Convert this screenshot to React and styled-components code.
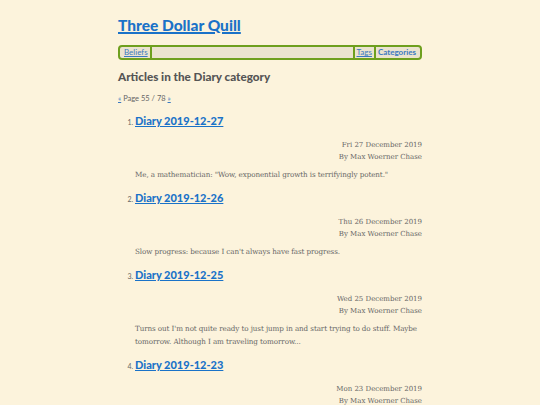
import React from 'react';
import styled, { createGlobalStyle } from 'styled-components';

const GlobalStyle = createGlobalStyle`
    html, body {
        margin: 0;
        padding: 0;
        background: #fcf3dc;
    }
`;

const articles = [
    {
        title: 'Diary 2019-12-27',
        date: 'Fri 27 December 2019',
        summary: 'Me, a mathematician: "Wow, exponential growth is terrifyingly potent."',
    },
    {
        title: 'Diary 2019-12-26',
        date: 'Thu 26 December 2019',
        summary: "Slow progress: because I can't always have fast progress.",
    },
    {
        title: 'Diary 2019-12-25',
        date: 'Wed 25 December 2019',
        summary: "Turns out I'm not quite ready to just jump in and start trying to do stuff. Maybe tomorrow. Although I am traveling tomorrow...",
    },
    {
        title: 'Diary 2019-12-23',
        date: 'Mon 23 December 2019',
        summary: '',
    },
];

function App() {
    return (
        <Page>
            <GlobalStyle />
            <Title href="#">Three Dollar Quill</Title>
            <Nav>
                <NavLink href="#">Beliefs</NavLink>
                <Spacer />
                <NavLink href="#">Tags</NavLink>
                <NavLink href="#" $current>Categories</NavLink>
            </Nav>
            <Heading>Articles in the Diary category</Heading>
            <Pager>
                <a href="#">«</a> Page 55 / 78 <a href="#">»</a>
            </Pager>
            <List>
                {articles.map((a) => (
                    <Item key={a.title}>
                        <ItemTitle href="#">{a.title}</ItemTitle>
                        <Meta>
                            <div>{a.date}</div>
                            <div>By Max Woerner Chase</div>
                        </Meta>
                        {a.summary && <Summary>{a.summary}</Summary>}
                    </Item>
                ))}
            </List>
        </Page>
    );
}

const Page = styled.div`
    width: 304px;
    margin: 0 auto;
    padding-top: 14px;
    font-family: 'DejaVu Serif', serif;
    color: #555;
`;

const Title = styled.a`
    display: block;
    font-family: 'Lato', 'Open Sans', sans-serif;
    font-weight: 900;
    font-size: 15.5px;
    line-height: 22px;
    color: #1a72c8;
    text-decoration: underline;
    text-decoration-thickness: 2px;
    margin-bottom: 9px;
`;

const Nav = styled.nav`
    display: flex;
    align-items: center;
    height: 11px;
    border: 2px solid #6e9f1e;
    border-radius: 4px;
    background: #ebe3cf;
    padding: 0 2px;
    font-family: 'Lato', sans-serif;
    font-size: 8px;
`;

const NavLink = styled.a`
    color: #3a79c0;
    font-weight: ${(p) => (p.$current ? 700 : 400)};
    text-decoration: ${(p) => (p.$current ? 'none' : 'underline')};
    padding: 0 2px;
    line-height: 11px;
    & + & {
        border-left: 2px solid #6e9f1e;
    }
`;

const Spacer = styled.div`
    flex: 1;
    align-self: stretch;
    border-left: 2px solid #6e9f1e;
    border-right: 2px solid #6e9f1e;
`;

const Heading = styled.h1`
    font-family: 'Lato', sans-serif;
    font-size: 11.7px;
    font-weight: 900;
    color: #555;
    margin: 8px 0 0;
    line-height: 16px;
`;

const Pager = styled.p`
    font-family: 'Lato', sans-serif;
    font-size: 7.5px;
    color: #666;
    margin: 10px 0 0;
    line-height: 10px;
    a {
        color: #3a79c0;
    }
`;

const List = styled.ol`
    margin: 9px 0 0;
    padding-left: 17px;
    font-size: 7px;
    line-height: 12px;
`;

const Item = styled.li`
    padding-bottom: 9px;
    &::marker {
        font-family: 'Lato', sans-serif;
        color: #666;
    }
`;

const ItemTitle = styled.a`
    font-family: 'Lato', sans-serif;
    font-size: 11px;
    font-weight: 900;
    line-height: 16px;
    color: #1a72c8;
    text-decoration: underline;
`;

const Meta = styled.div`
    text-align: right;
    font-size: 7px;
    line-height: 12px;
    margin-top: 10px;
    color: #666;
`;

const Summary = styled.p`
    font-size: 7.2px;
    letter-spacing: -0.1px;
    line-height: 13px;
    margin: 5px 0 0;
    color: #666;
`;

export default App;
